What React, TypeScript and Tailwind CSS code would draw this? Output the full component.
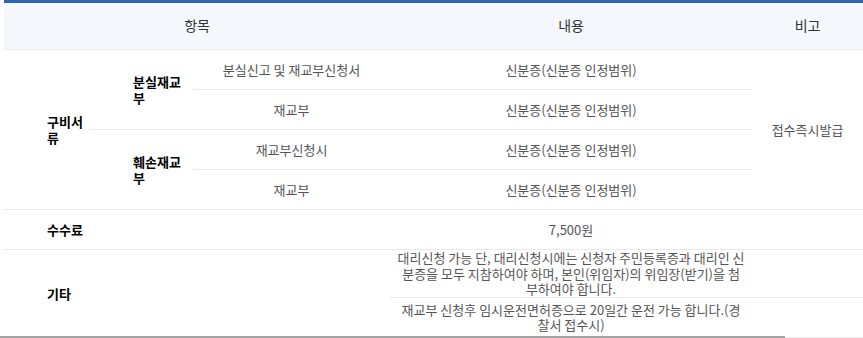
const cell = "border-b border-[#e9e9e9] text-[#555] text-center align-middle px-0 py-0";
const label = "border-b border-[#e9e9e9] text-black font-bold text-left align-middle pl-[43px] pr-[4px] py-0";

const idRange = "신분증(신분증 인정범위)";

export default function App() {
  return (
    <div
      className="relative w-[863px] h-[338px] overflow-hidden bg-white text-[13px] leading-[15.5px]"
      style={{ fontFamily: '"Noto Sans CJK KR", "Noto Sans", sans-serif' }}
    >
      <div className="pl-[4px]">
        <table className="w-[859px] table-fixed border-collapse border-t-[3px] border-[#2d64b6]">
          <colgroup>
            <col className="w-[86px]" />
            <col className="w-[103px]" />
            <col className="w-[197px]" />
            <col className="w-[362px]" />
            <col className="w-[111px]" />
          </colgroup>
          <thead>
            <tr className="h-[48px] bg-[#f4f7fc]">
              <th colSpan={3} className="border-b border-[#e9e9e9] font-normal text-[14px] text-[#333] text-center">
                항목
              </th>
              <th className="border-b border-[#e9e9e9] font-normal text-[14px] text-[#333] text-center">내용</th>
              <th className="border-b border-[#e9e9e9] font-normal text-[14px] text-[#333] text-center">비고</th>
            </tr>
          </thead>
          <tbody>
            <tr className="h-10">
              <td rowSpan={4} className={label}>
                구비서류
              </td>
              <td rowSpan={2} className={label}>
                분실재교부
              </td>
              <td className={cell}>분실신고 및 재교부신청서</td>
              <td className={cell}>{idRange}</td>
              <td rowSpan={4} className={cell}>
                접수즉시발급
              </td>
            </tr>
            <tr className="h-10">
              <td className={cell}>재교부</td>
              <td className={cell}>{idRange}</td>
            </tr>
            <tr className="h-10">
              <td rowSpan={2} className={label}>
                훼손재교부
              </td>
              <td className={cell}>재교부신청시</td>
              <td className={cell}>{idRange}</td>
            </tr>
            <tr className="h-10">
              <td className={cell}>재교부</td>
              <td className={cell}>{idRange}</td>
            </tr>
            <tr className="h-10">
              <td colSpan={3} className={label}>
                수수료
              </td>
              <td className={cell}>7,500원</td>
              <td className={cell}></td>
            </tr>
            <tr className="h-[46px]">
              <td colSpan={3} rowSpan={2} className={label}>
                기타
              </td>
              <td className={`${cell} text-[#444] px-[2px]`}>
                대리신청 가능 단, 대리신청시에는 신청자 주민등록증과 대리인 신<br />
                분증을 모두 지참하여야 하며, 본인(위임자)의 위임장(받기)을 첨<br />
                부하여야 합니다.
              </td>
              <td className={cell}></td>
            </tr>
            <tr className="h-10">
              <td className={`${cell} text-[#444] px-[2px]`}>
                재교부 신청후 임시운전면허증으로 20일간 운전 가능 합니다.(경<br />
                찰서 접수시)
              </td>
              <td className={cell}></td>
            </tr>
          </tbody>
        </table>
      </div>
      <div className="absolute left-0 bottom-0 h-[2px] w-[785px] bg-[#a3a3a3]" />
    </div>
  );
}
